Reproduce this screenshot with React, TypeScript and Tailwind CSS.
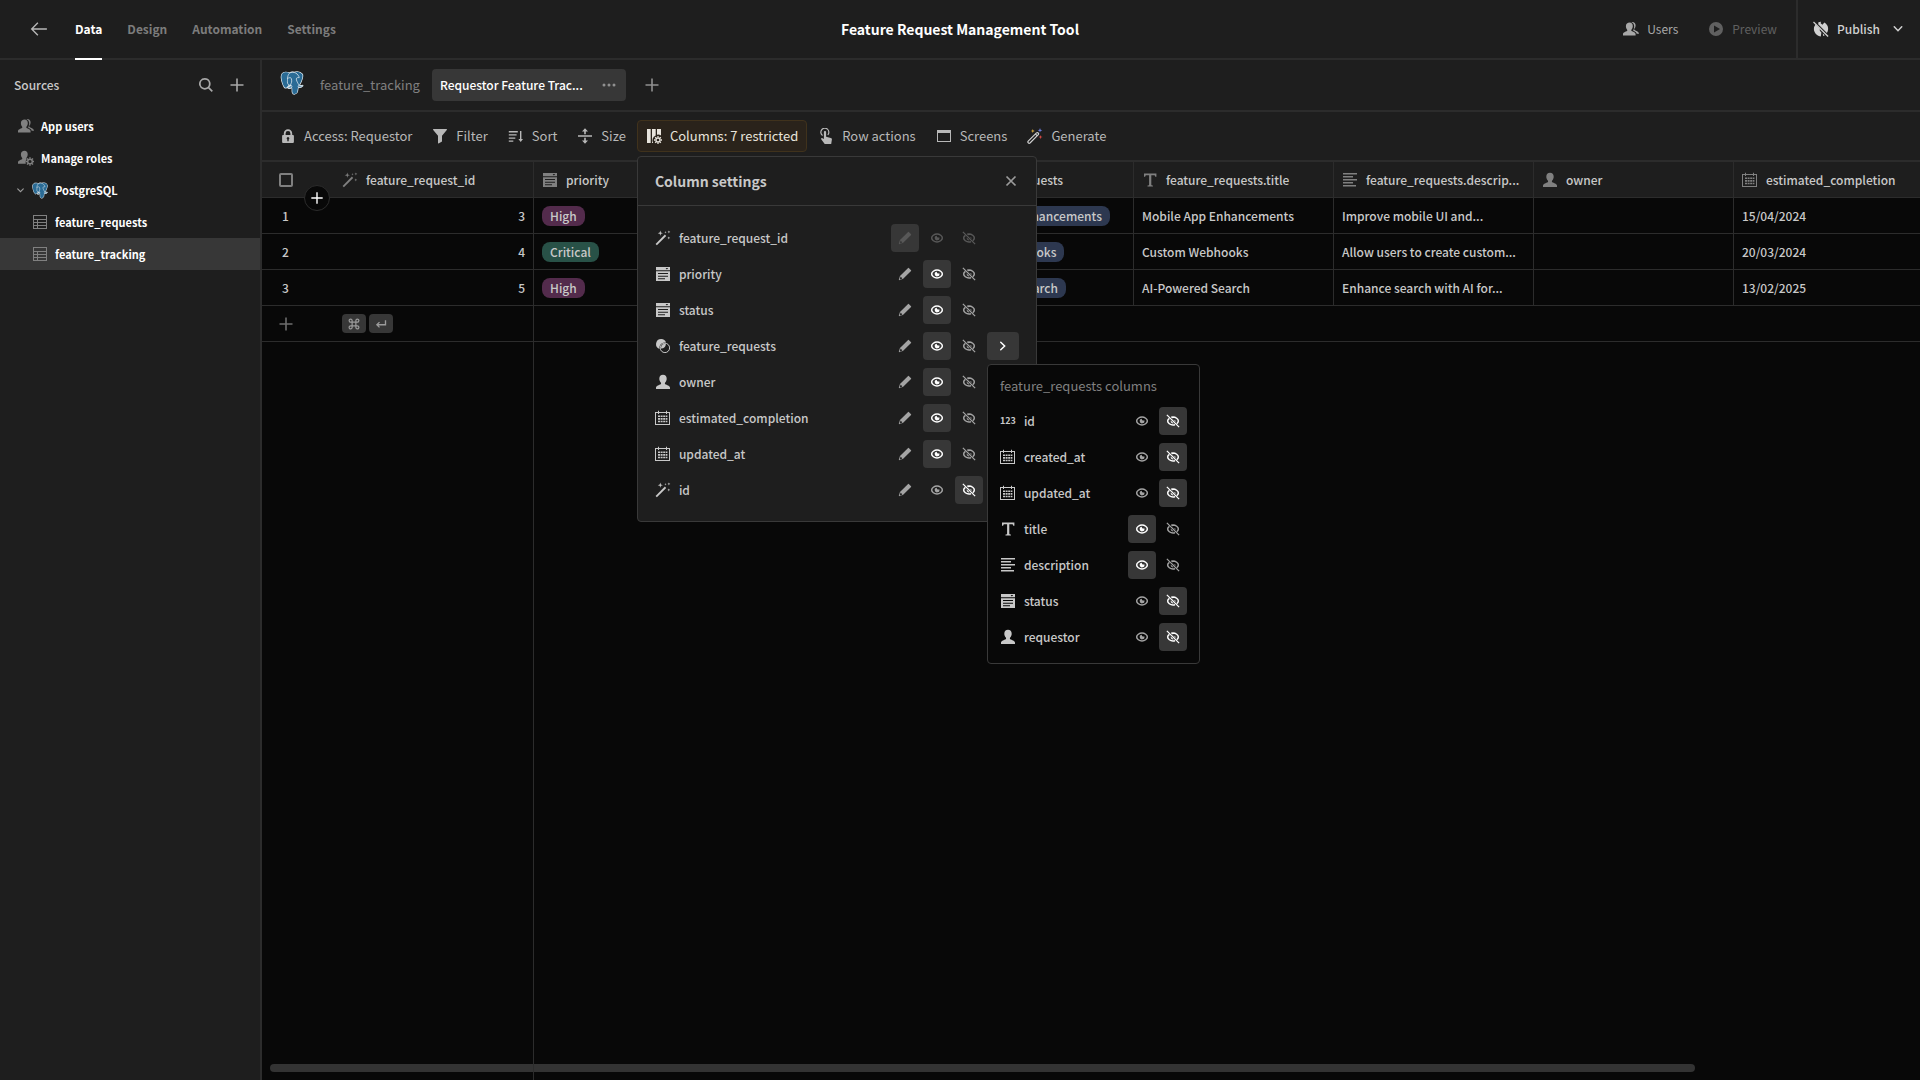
import type { ReactNode } from "react";

type IconProps = { className?: string };

type Kind = "wand" | "list" | "relation" | "user" | "date" | "text" | "long" | "number";

const COLUMNS: { name: string; kind: Kind }[] = [
  { name: "priority", kind: "list" },
  { name: "status", kind: "list" },
  { name: "feature_requests", kind: "relation" },
  { name: "feature_requests.title", kind: "text" },
  { name: "feature_requests.descrip...", kind: "long" },
  { name: "owner", kind: "user" },
  { name: "estimated_completion", kind: "date" },
];

const ROWS = [
  {
    id: 3,
    priority: "High",
    title: "Mobile App Enhancements",
    description: "Improve mobile UI and...",
    completion: "15/04/2024",
  },
  {
    id: 4,
    priority: "Critical",
    title: "Custom Webhooks",
    description: "Allow users to create custom...",
    completion: "20/03/2024",
  },
  {
    id: 5,
    priority: "High",
    title: "AI-Powered Search",
    description: "Enhance search with AI for...",
    completion: "13/02/2025",
  },
];

type Mode = "write" | "read" | "hidden";

const SETTINGS: { name: string; kind: Kind; mode: Mode; disabled?: boolean; nested?: boolean }[] = [
  { name: "feature_request_id", kind: "wand", mode: "write", disabled: true },
  { name: "priority", kind: "list", mode: "read" },
  { name: "status", kind: "list", mode: "read" },
  { name: "feature_requests", kind: "relation", mode: "read", nested: true },
  { name: "owner", kind: "user", mode: "read" },
  { name: "estimated_completion", kind: "date", mode: "read" },
  { name: "updated_at", kind: "date", mode: "read" },
  { name: "id", kind: "wand", mode: "hidden" },
];

const NESTED: { name: string; kind: Kind; mode: Mode }[] = [
  { name: "id", kind: "number", mode: "hidden" },
  { name: "created_at", kind: "date", mode: "hidden" },
  { name: "updated_at", kind: "date", mode: "hidden" },
  { name: "title", kind: "text", mode: "read" },
  { name: "description", kind: "long", mode: "read" },
  { name: "status", kind: "list", mode: "hidden" },
  { name: "requestor", kind: "user", mode: "hidden" },
];

function Svg({ className = "h-4 w-4", children }: { className?: string; children: ReactNode }) {
  return (
    <svg viewBox="0 0 16 16" fill="currentColor" aria-hidden="true" className={`shrink-0 ${className}`}>
      {children}
    </svg>
  );
}

function PostgresLogo({ className }: IconProps) {
  const body =
    "M402.395,271.23c-50.302,10.376-53.76-6.655-53.76-6.655c53.111-78.808,75.313-178.843,56.153-203.326c-52.27-66.785-142.752-35.2-144.262-34.38l-0.486,0.087c-9.938-2.063-21.06-3.292-33.56-3.496c-22.761-0.373-40.026,5.967-53.127,15.902c0,0-161.411-66.495-153.904,83.63c1.597,31.938,45.776,241.657,98.471,178.312c19.26-23.162,37.869-42.748,37.869-42.748c9.243,6.14,20.308,9.272,31.908,8.147l0.901-0.765c-0.28,2.876-0.152,5.689,0.361,9.019c-13.575,15.167-9.586,17.83-36.723,23.416c-27.457,5.659-11.327,15.734-0.796,18.367c12.768,3.193,42.305,7.716,62.266-20.224l-0.796,3.188c5.319,4.26,9.054,27.711,8.428,48.969c-0.626,21.259-1.044,35.854,3.147,47.254c4.191,11.4,8.368,37.05,44.042,29.406c29.809-6.388,45.256-22.942,47.405-50.555c1.525-19.631,4.976-16.729,5.194-34.28l2.768-8.309c3.192-26.611,0.507-35.196,18.872-31.203l4.463,0.392c13.517,0.615,31.208-2.174,41.591-7c22.358-10.376,35.618-27.7,13.573-23.148z";
  return (
    <svg viewBox="0 0 432 446" aria-hidden="true" className={`shrink-0 ${className}`}>
      <path d={body} fill="#dfeaf0" stroke="#dfeaf0" strokeWidth="26" strokeLinejoin="round" />
      <path d={body} fill="#2a6b95" />
      <g fill="none" stroke="#dfeaf0" strokeWidth="14" strokeLinecap="round" strokeLinejoin="round">
        <path d="M348.282,263.953c0,0,3.461,17.036,53.764,6.653c22.04-4.552,8.776,12.774-13.577,23.155c-18.345,8.514-59.474,10.696-60.146-1.069c-1.729-30.355,21.647-21.133,19.96-28.739c-1.525-6.85-11.979-13.573-18.894-30.338c-6.037-14.633-82.796-126.849,21.287-110.183c3.813-0.789-27.146-99.002-124.553-100.599c-97.385-1.597-94.19,119.762-94.19,119.762" />
        <path d="M188.604,274.334c-13.577,15.166-9.584,17.829-36.723,23.417c-27.459,5.66-11.326,15.733-0.797,18.365c12.768,3.195,42.307,7.718,62.266-20.229c6.078-8.509-0.036-22.086-8.385-25.547c-4.034-1.671-9.428-3.765-16.361,3.994z" />
        <path d="M187.715,274.069c-1.368-8.917,2.93-19.528,7.536-31.942c6.922-18.626,22.893-37.255,10.117-96.339c-9.523-44.029-73.396-9.163-73.436-3.193c-0.039,5.968,2.889,30.26-1.067,58.548c-5.162,36.913,23.488,68.132,56.479,64.938" />
      </g>
    </svg>
  );
}

function KindIcon({ kind }: { kind: Kind }) {
  if (kind === "number") {
    return <span className="w-4 text-[9px] leading-4 font-bold">123</span>;
  }
  if (kind === "wand") {
    return (
      <Svg>
        <path d="M.6 13.9 9.9 4.6l1.3 1.3-9.3 9.3z" />
        <path d="M5.3.6l.6 2 2 .6-2 .6-.6 2-.6-2-2-.6 2-.6zM10.5 1l.3.9.9.3-.9.3-.3.9-.3-.9-.9-.3.9-.3zM13.9.4l.4 1.1 1.1.4-1.1.4-.4 1.1-.4-1.1-1.1-.4 1.1-.4zM13.8 6.4l.4 1.1 1.1.4-1.1.4-.4 1.1-.4-1.1-1.1-.4 1.1-.4z" />
      </Svg>
    );
  }
  if (kind === "list") {
    return (
      <Svg>
        <path fillRule="evenodd" d="M1 1h14v3.2H1zM10.6 2l1.3 1.5L13.2 2z" />
        <path fillRule="evenodd" d="M1 5.2h14V15H1zM3 7v1h10V7zm0 2.7v1h10v-1zm0 2.6v1h7v-1z" />
      </Svg>
    );
  }
  if (kind === "relation") {
    return (
      <Svg>
        <path d="M6.2 1a5.2 5.2 0 0 1 4.9 3.5 5.6 5.6 0 0 0-6.6 6.6A5.2 5.2 0 0 1 6.2 1z" />
        <circle cx="9.9" cy="9.9" r="4.7" fill="none" stroke="currentColor" strokeWidth="1" />
        <path d="M6 10.6a4.4 4.4 0 0 1 4.9-4.9 5.2 5.2 0 0 1-4.9 4.9z" />
      </Svg>
    );
  }
  if (kind === "user") {
    return (
      <Svg>
        <path d="M8 .8c2.300 0 3.700 1.600 3.700 3.900 0 1.500-.6 2.900-1.500 3.800-.4.400-.4 1.500.1 1.800 1.400.800 4.700 1.300 4.700 3.500V15H1v-1.200c0-2.200 3.300-2.700 4.700-3.500.5-.3.5-1.400.1-1.800-.9-.9-1.500-2.300-1.500-3.800C4.300 2.400 5.700.8 8 .8z" />
      </Svg>
    );
  }
  if (kind === "date") {
    return (
      <Svg>
        <path fillRule="evenodd" d="M0 2h3v2h1V2h7v2h1V2h3v13H0zm1 1v11h13V3z" />
        <path d="M3 .8h1V4H3zM11 .8h1V4h-1zM3 5.500h2v1.600H3zM5.600 5.500h2v1.600h-2zM8.200 5.500h2v1.600h-2zM10.800 5.500h1.600v1.600h-1.600zM3 8.100h2v1.600H3zM5.600 8.100h2v1.600h-2zM8.200 8.100h2v1.600h-2zM10.800 8.100h1.600v1.600h-1.600zM3 10.700h2v1.600H3zM5.600 10.700h2v1.600h-2zM8.200 10.700h2v1.600h-2zM10.800 10.700h1.600v1.600h-1.600z" />
      </Svg>
    );
  }
  if (kind === "text") {
    return (
      <Svg>
        <path d="M2 1.500h12.400v3.300h-1.200c-.1-1.100-.5-1.500-1.600-1.500H9.300v9.200c0 .8.4 1 1.600 1v1H5.500v-1c1.200 0 1.600-.2 1.600-1V3.300H4.800c-1.100 0-1.500.4-1.600 1.500H2z" />
      </Svg>
    );
  }
  return (
    <Svg>
      <path d="M1 1h14v1.500H1zM1 4h10v1.500H1zM1 7h14v1.500H1zM1 10h10v1.500H1zM1 13h13v1.500H1z" />
    </Svg>
  );
}

function UsersIcon() {
  return (
    <Svg>
      <path d="M6.600 1.500c2 0 3.200 1.500 3.200 3.500 0 1.400-.5 2.600-1.200 3.400-.4.400-.4 1.300 0 1.600 1.200.8 4 1.200 4 3.200V14.500H0v-1.300c0-2 2.800-2.400 4-3.200.4-.3.400-1.200 0-1.600C3.300 7.600 2.900 6.400 2.900 5c0-2 1.600-3.500 3.700-3.500z" />
      <path d="M9.300.9c2 0 3.300 1.500 3.300 3.500 0 1.300-.4 2.400-1.100 3.200-.4.400-.3 1.200.1 1.500 1.200.8 4.400 1.700 4.400 3.700h-2.300c-.3-2-2.600-2.600-3.700-3.300.7-1 1.200-2.500 1.200-4 0-2.100-1-3.600-2.900-4.200z" />
    </Svg>
  );
}

function ManageIcon() {
  return (
    <Svg>
      <path d="M6.500.8c2 0 3.200 1.500 3.200 3.500 0 1.400-.5 2.600-1.200 3.400-.3.400-.2 1.100.1 1.500-.8.900-1.200 2.500-.8 4.600H0v-1.300c0-2 2.800-2.400 4-3.200.4-.3.400-1.200 0-1.600C3.300 6.900 2.900 5.700 2.900 4.300c0-2 1.500-3.500 3.600-3.500z" />
      <circle cx="12" cy="11.500" r="2.300" fill="none" stroke="currentColor" strokeWidth="1.400" />
      <path
        d="M12 7.200v1.600M12 14.200v1.600M7.700 11.500h1.600M14.700 11.500h1.600M9 8.500l1.100 1.100M13.900 13.400l1.100 1.100M9 14.500l1.100-1.100M13.900 9.600 15 8.500"
        stroke="currentColor"
        strokeWidth="1.400"
      />
    </Svg>
  );
}

function PlusIcon({ className }: IconProps) {
  return (
    <Svg className={className}>
      <path d="M7.200 1.500h1.600v5.700h5.700v1.600H8.800v5.700H7.200V8.800H1.500V7.200h5.700z" />
    </Svg>
  );
}

function SearchIcon() {
  return (
    <Svg>
      <path d="M6.800 1a5.800 5.800 0 0 1 4.600 9.300l3.500 3.500-1.200 1.200-3.500-3.500A5.800 5.800 0 1 1 6.800 1zm0 1.700a4.100 4.100 0 1 0 0 8.200 4.100 4.100 0 0 0 0-8.200z" />
    </Svg>
  );
}

function ChevronIcon({ className }: IconProps) {
  return (
    <Svg className={className}>
      <path d="m3 5 5 5.200L13 5" fill="none" stroke="currentColor" strokeWidth="2" strokeLinecap="round" />
    </Svg>
  );
}

function TableIcon() {
  return (
    <Svg>
      <path fillRule="evenodd" d="M1 1h14v14H1zm1 1v3h12V2zm0 4v2h3V6zm4 0v2h8V6zM2 9v2h3V9zm4 0v2h8V9zm-4 3v2h3v-2zm4 0v2h8v-2z" />
    </Svg>
  );
}

function PencilIcon() {
  return (
    <svg viewBox="0 0 36 36" fill="currentColor" aria-hidden="true" className="h-[14px] w-[14px]">
      <path d="M33.567 8.200 27.800 2.432a1.215 1.215 0 0 0-.866-.353H26.900a1.371 1.371 0 0 0-.927.406L5.084 23.372a.99.99 0 0 0-.251.422L2.055 33.100c-.114.377.459.851.783.851.3-.02 7.928-2.351 9.373-2.785a.972.972 0 0 0 .414-.249l20.888-20.889a1.372 1.372 0 0 0 .406-.91 1.233 1.233 0 0 0-.352-.918zM11.400 29.316c-2.161.649-4.862 1.465-6.729 2.022l2.009-6.730z" />
    </svg>
  );
}

function EyeIcon() {
  return (
    <Svg className="h-[14px] w-[14px]">
      <path d="M8 3.400C5 3.400 1.900 5.700 1.900 8S5 12.600 8 12.600s6.100-2.300 6.100-4.600S11 3.400 8 3.400z" fill="none" stroke="currentColor" strokeWidth="1.700" />
      <path d="M8 5.300a1.300 1.300 0 0 0 1 2 1.300 1.300 0 0 0 1.600-.2A2.700 2.700 0 1 1 8 5.300z" />
    </Svg>
  );
}

function EyeOffIcon() {
  return (
    <Svg className="h-[14px] w-[14px]">
      <path
        d="M6 3.800a7 7 0 0 1 2-.4c3 0 6.100 2.300 6.100 4.600 0 1.100-.7 2.200-1.800 3.100M3.900 4.900C2.700 5.800 1.900 6.900 1.900 8c0 2.300 3.100 4.600 6.100 4.600.8 0 1.600-.2 2.300-.4"
        fill="none"
        stroke="currentColor"
        strokeWidth="1.700"
      />
      <path d="M8 5.300a1.300 1.300 0 0 0 1 2 1.300 1.300 0 0 0 1.600-.2q.4 1 0 2L7 5.500zM5.400 7.500l3.200 3.200a2.700 2.700 0 0 1-3.200-3.200z" />
      <path d="m1 1 14 14" stroke="currentColor" strokeWidth="1.500" />
    </Svg>
  );
}

function ModeButton({ mode, active, disabled }: { mode: Mode; active: boolean; disabled?: boolean }) {
  return (
    <button
      type="button"
      aria-label={mode}
      aria-pressed={active}
      disabled={disabled}
      className={[
        "flex h-7 w-7 items-center justify-center rounded",
        active ? "bg-[#373737]" : "",
        disabled ? "text-[#585858]" : active ? "text-white" : "text-[#a4a4a4]",
      ].join(" ")}
    >
      {mode === "write" && <PencilIcon />}
      {mode === "read" && <EyeIcon />}
      {mode === "hidden" && <EyeOffIcon />}
    </button>
  );
}

function NestedColumns() {
  return (
    <div className="absolute top-full left-0 z-30 mt-1 flex w-[213px] flex-col gap-3 rounded border border-[#393939] bg-[#080808] p-3">
      <h3 className="text-[13px] leading-[18px] text-[#808080]">feature_requests columns</h3>
      <ul className="flex flex-col gap-2 text-[#c8c8c8]">
        {NESTED.map((column) => (
          <li key={column.name} className="flex h-7 items-center gap-2">
            <KindIcon kind={column.kind} />
            <span className="flex-1 text-xs leading-5 font-medium">{column.name}</span>
            <div className="flex gap-[3px]">
              <ModeButton mode="read" active={column.mode === "read"} />
              <ModeButton mode="hidden" active={column.mode === "hidden"} />
            </div>
          </li>
        ))}
      </ul>
    </div>
  );
}

function ColumnSettings() {
  return (
    <div className="absolute top-full left-0 z-20 mt-1 w-[400px] rounded border border-[#393939] bg-[#1e1e1e] text-[#c8c8c8]">
      <header className="flex h-[49px] items-center justify-between border-b border-[#393939] px-[17px]">
        <h2 className="text-sm leading-5 font-bold">Column settings</h2>
        <button type="button" aria-label="Close" className="text-[#9b9b9b]">
          <Svg>
            <path d="m3.500 3.500 9 9m0-9-9 9" stroke="currentColor" strokeWidth="1.700" />
          </Svg>
        </button>
      </header>
      <ul className="flex flex-col gap-2 px-[17px] pt-[18px] pb-[17px]">
        {SETTINGS.map((column) => (
          <li key={column.name} className="flex h-7 items-center gap-2">
            <KindIcon kind={column.kind} />
            <span className="flex-1 text-xs leading-5 font-medium">{column.name}</span>
            <div className="grid grid-cols-[28px_28px_28px_32px] gap-1">
              <ModeButton mode="write" active={column.mode === "write"} disabled={column.disabled} />
              <ModeButton mode="read" active={column.mode === "read"} disabled={column.disabled} />
              <ModeButton mode="hidden" active={column.mode === "hidden"} disabled={column.disabled} />
              {column.nested && (
                <div className="relative">
                  <button
                    type="button"
                    aria-label="Nested columns"
                    className="flex h-7 w-8 items-center justify-center rounded bg-[#373737] text-white"
                  >
                    <ChevronIcon className="h-3 w-3 -rotate-90" />
                  </button>
                  <NestedColumns />
                </div>
              )}
            </div>
          </li>
        ))}
      </ul>
    </div>
  );
}

function Tool({ icon, label, active }: { icon: ReactNode; label: string; active?: boolean }) {
  return (
    <button
      type="button"
      className={[
        "flex h-8 items-center gap-2 rounded border px-2 text-[13px] leading-5 whitespace-nowrap",
        active ? "border-[#40321c] bg-[#2a231b] text-[#e8e4dc]" : "border-transparent text-[#b8b8b8]",
      ].join(" ")}
    >
      {icon}
      {label}
    </button>
  );
}

function Toolbar() {
  return (
    <div className="flex h-[50px] items-center gap-[2px] border-b-2 border-[#2c2c2c] px-[9px]">
      <Tool
        label="Access: Requestor"
        icon={
          <Svg>
            <path fillRule="evenodd" d="M13 7h-.8V5.400a4.200 4.200 0 0 0-8.400 0V7H3a.9.9 0 0 0-.9.900v6.200c0 .5.400.9.9.9h10c.5 0 .9-.4.9-.9V7.900A.9.9 0 0 0 13 7zM5.600 5.400a2.400 2.400 0 0 1 4.800 0V7H5.600zm3.100 6v1.900H7.300v-1.900a1.300 1.300 0 1 1 1.400 0z" />
          </Svg>
        }
      />
      <Tool
        label="Filter"
        icon={
          <Svg>
            <path d="M1.600 1h12.800c.5 0 .7.500.4.9L10 7.800v5.600l-3.400 2c-.3.1-.6 0-.6-.4V7.800L1.200 1.900c-.3-.4-.1-.9.4-.9z" />
          </Svg>
        }
      />
      <Tool
        label="Sort"
        icon={
          <Svg>
            <path d="M.8 3h9v1.400h-9zM.8 6.200h7.800v1.400H.8zM.8 9.400h6.500v1.400H.8zM.8 12.400h4.500v1.400H.8zM12 3h1.400v8H15l-2.300 3-2.300-3H12z" />
          </Svg>
        }
      />
      <Tool
        label="Size"
        icon={
          <Svg>
            <path d="M1 7.200h14v1.600H1zM8 .3l3 3.200H8.800v2.700H7.200V3.500H5zM8 15.700l-3-3.200h2.200V9.800h1.600v2.700H11z" />
          </Svg>
        }
      />
      <div className="relative">
        <Tool
          active
          label="Columns: 7 restricted"
          icon={
            <Svg>
              <path d="M1 1h3.700v14H1zM6 1h3.700v6.600A5 5 0 0 0 7.200 15H6zM11 1h4v6.500a5 5 0 0 0-4-.8z" />
              <circle cx="12" cy="12" r="2" fill="none" stroke="currentColor" strokeWidth="1.300" />
              <path d="M12 8v1.500M12 14.500V16M8 12h1.500M14.500 12H16M9.200 9.200l1 1M13.800 13.800l1 1M9.200 14.800l1-1M13.800 10.200l1-1" stroke="currentColor" strokeWidth="1.300" />
            </Svg>
          }
        />
        <ColumnSettings />
      </div>
      <Tool
        label="Row actions"
        icon={
          <Svg>
            <path d="M5.900 4.200c0-.7.500-1.100 1.100-1.100s1.100.4 1.100 1.100v4.500l4.700 1.200c.8.200 1.200.8 1.100 1.600L13.200 16H6.700L3.200 11.300c-.4-.6.400-1.500 1.200-1.100l1.500.9z" />
            <path d="M4.600 7.500a4 4 0 1 1 5.200-.6" fill="none" stroke="currentColor" strokeWidth="1.200" />
          </Svg>
        }
      />
      <Tool
        label="Screens"
        icon={
          <Svg>
            <path fillRule="evenodd" d="M1 2h14v12H1zm1 3v8h12V5z" />
          </Svg>
        }
      />
      <Tool
        label="Generate"
        icon={
          <Svg>
            <path d="m1.200 13.200 8.300-8.300c1.200-1 2.800.6 1.800 1.800L3 15c-1.200.9-2.700-.7-1.800-1.800zM8.600 6.200l1.700 1.700" fill="none" stroke="#d0d0d0" strokeWidth="1.200" />
            <path d="m5.800.9.5 1.500 1.500.5-1.500.5-.5 1.500-.5-1.500-1.500-.5 1.500-.5z" fill="#e3b341" />
            <path d="m13 0 .6 1.700 1.700.6-1.700.6L13 4.600l-.6-1.700-1.700-.6 1.700-.6z" fill="#6d7fe0" />
            <path d="m13.500 7 .5 1.600 1.600.5-1.600.5-.5 1.600-.5-1.600-1.600-.5 1.600-.5z" fill="#dd4b45" />
          </Svg>
        }
      />
    </div>
  );
}

function Header() {
  return (
    <header className="relative flex h-[60px] shrink-0 items-center justify-between border-b-2 border-[#2c2c2c] text-xs leading-5">
      <div className="flex h-full items-center">
        <a href="#back" aria-label="Back" className="mr-[27px] ml-[30px] text-[#b8b8b8]">
          <Svg className="h-[18px] w-[18px]">
            <path d="M7 2.500 1.500 8 7 13.500M1.500 8H15" fill="none" stroke="currentColor" strokeWidth="1.200" />
          </Svg>
        </a>
        <nav className="-mb-[2px] flex h-[60px] gap-[25px] pt-[19px] font-bold text-[#7c7c7c]">
          <a href="#data" className="border-b-2 border-white text-white">
            Data
          </a>
          <a href="#design">Design</a>
          <a href="#automation">Automation</a>
          <a href="#settings">Settings</a>
        </nav>
      </div>
      <h1 className="absolute left-1/2 -translate-x-1/2 text-sm font-bold text-white">
        Feature Request Management Tool
      </h1>
      <div className="flex h-full items-center">
        <button type="button" className="mr-[30px] flex items-center gap-2 text-[#a8a8a8]">
          <UsersIcon />
          Users
        </button>
        <button type="button" disabled className="mr-[19px] flex items-center gap-2 text-[#606060]">
          <Svg>
            <path fillRule="evenodd" d="M8 1a7 7 0 1 1 0 14A7 7 0 0 1 8 1zM6 4.500v7L12 8z" />
          </Svg>
          Preview
        </button>
        <button type="button" className="flex h-full items-center gap-2 border-l-2 border-[#2c2c2c] pr-4 pl-[15px] font-medium text-[#d0d0d0]">
          <Svg>
            <path d="M5.400 1.200A7 7 0 0 1 8 .8l-.4 1.500 1.800 1.400 2-2.200a7.400 7.400 0 0 1 3.700 6.700c-.1 1.400-.5 2.600-1.200 3.700L5.200 3.200zM2.500 3.500l4.300 4.300v2l1.600 1.700-.6 3.900A7.400 7.400 0 0 1 2.500 3.500zM9.800 12.500l2 1.700-1.700.8z" />
            <path d="m.5 1 14.600 14.500" stroke="currentColor" strokeWidth="1.300" />
          </Svg>
          Publish
          <ChevronIcon className="ml-1 h-3 w-3" />
        </button>
      </div>
    </header>
  );
}

function Sidebar() {
  return (
    <aside className="w-[262px] shrink-0 border-r-2 border-[#2c2c2c]">
      <div className="flex h-[50px] items-center gap-[15px] pr-[15px] pl-[14px] text-[#a8a8a8]">
        <h2 className="flex-1 text-xs leading-5 font-medium text-[#c8c8c8]">Sources</h2>
        <button type="button" aria-label="Search">
          <SearchIcon />
        </button>
        <button type="button" aria-label="Add source">
          <PlusIcon />
        </button>
      </div>
      <nav className="flex flex-col text-[11px] leading-4 font-bold text-white">
        <a href="#users" className="flex h-8 items-center gap-[7px] pl-[18px]">
          <span className="text-[#808080]">
            <UsersIcon />
          </span>
          App users
        </a>
        <a href="#roles" className="flex h-8 items-center gap-[7px] pl-[18px]">
          <span className="text-[#808080]">
            <ManageIcon />
          </span>
          Manage roles
        </a>
        <a href="#postgresql" className="flex h-8 items-center gap-[7px] pl-4">
          <ChevronIcon className="h-[9px] w-[9px] text-[#9b9b9b]" />
          <PostgresLogo className="h-[17px] w-4" />
          PostgreSQL
        </a>
        <a href="#feature_requests" className="flex h-8 items-center gap-[7px] pl-8">
          <span className="text-[#808080]">
            <TableIcon />
          </span>
          feature_requests
        </a>
        <a href="#feature_tracking" className="flex h-8 items-center gap-[7px] bg-[#373737] pl-8">
          <span className="text-[#808080]">
            <TableIcon />
          </span>
          feature_tracking
        </a>
      </nav>
    </aside>
  );
}

function Tabs() {
  return (
    <div className="flex h-[52px] items-center border-b-2 border-[#2c2c2c] pl-[18px] leading-5">
      <PostgresLogo className="mb-1 h-6 w-6" />
      <a href="#feature_tracking" className="mr-3 ml-4 text-[13px] text-[#808080]">
        feature_tracking
      </a>
      <div className="flex h-8 w-[194px] items-center justify-between rounded bg-[#373737] pr-[9px] pl-2">
        <a href="#requestor" className="text-xs font-medium text-white">
          Requestor Feature Trac...
        </a>
        <button type="button" aria-label="More" className="text-[#909090]">
          <Svg>
            <circle cx="3" cy="8" r="1.500" />
            <circle cx="8" cy="8" r="1.500" />
            <circle cx="13" cy="8" r="1.500" />
          </Svg>
        </button>
      </div>
      <button type="button" aria-label="Add view" className="ml-[18px] text-[#909090]">
        <PlusIcon />
      </button>
    </div>
  );
}

function Pill({ label, tone }: { label: string; tone: string }) {
  return (
    <span className={`inline-block rounded-lg px-2 leading-5 whitespace-nowrap ${tone}`}>
      {label}
    </span>
  );
}

function Grid() {
  const cell = "h-9 border-r border-b border-[#2c2c2c] px-2 truncate";
  return (
    <div className="relative flex flex-1 flex-col overflow-hidden bg-[#080808]">
      <table className="w-[1672px] table-fixed border-separate border-spacing-0 text-xs leading-5 font-medium text-[#c8c8c8]">
        <colgroup>
          <col className="w-[72px]" />
          <col className="w-[200px]" />
          {COLUMNS.map((column) => (
            <col key={column.name} className="w-[200px]" />
          ))}
        </colgroup>
        <thead className="bg-[#1e1e1e] text-left">
          <tr>
            <th className="h-9 border-b border-[#2c2c2c] pl-[17px]">
              <input
                type="checkbox"
                aria-label="Select all rows"
                className="block h-[14px] w-[14px] appearance-none rounded-xs border-2 border-[#808080]"
              />
            </th>
            {[{ name: "feature_request_id", kind: "wand" as Kind }, ...COLUMNS].map((column) => (
              <th key={column.name} className={`${cell} font-medium`}>
                <div className="flex items-center gap-2">
                  <span className="text-[#808080]">
                    <KindIcon kind={column.kind} />
                  </span>
                  {column.name}
                </div>
              </th>
            ))}
          </tr>
        </thead>
        <tbody>
          {ROWS.map((row, index) => (
            <tr key={row.id}>
              <td className="h-9 border-b border-[#2c2c2c] pl-5">{index + 1}</td>
              <td className={`${cell} text-right`}>{row.id}</td>
              <td className={cell}>
                <Pill label={row.priority} tone={row.priority === "High" ? "bg-[#532b4c]" : "bg-[#285147]"} />
              </td>
              <td className={cell} />
              <td className={cell}>
                <Pill label={row.title} tone="bg-[#2d3850]" />
              </td>
              <td className={cell}>{row.title}</td>
              <td className={cell}>{row.description}</td>
              <td className={cell} />
              <td className={cell}>{row.completion}</td>
            </tr>
          ))}
          <tr>
            <td className="h-9 border-b border-[#2c2c2c] pl-4">
              <button type="button" aria-label="Add row" className="block text-[#6d6d6d]">
                <PlusIcon />
              </button>
            </td>
            <td className={cell}>
              <div className="flex gap-[3px] text-[#9b9b9b]">
                <kbd className="flex h-[19px] w-6 items-center justify-center rounded bg-[#373737]">
                  <Svg className="h-3 w-3">
                    <path
                      d="M5.500 5.500h5v5h-5zM5.500 5.500V3.700a2 2 0 1 0-1.900 1.800zM10.500 5.500V3.700a2 2 0 1 1 1.900 1.800zM5.500 10.500v1.800a2 2 0 1 1-1.900-1.800zM10.500 10.500v1.800a2 2 0 1 0 1.900-1.800z"
                      fill="none"
                      stroke="currentColor"
                      strokeWidth="1.600"
                    />
                  </Svg>
                </kbd>
                <kbd className="flex h-[19px] w-6 items-center justify-center rounded bg-[#373737]">
                  <Svg className="h-3 w-3">
                    <path d="M14 3v6H3M6 5.500 2.500 9 6 12.500" fill="none" stroke="currentColor" strokeWidth="1.800" />
                  </Svg>
                </kbd>
              </div>
            </td>
            <td colSpan={COLUMNS.length} className="border-b border-[#2c2c2c]" />
          </tr>
        </tbody>
      </table>
      <div className="z-10 w-[272px] flex-1 border-r border-[#2c2c2c]" />
      <button
        type="button"
        aria-label="Add"
        className="absolute top-[23px] left-[42px] flex h-[26px] w-[26px] items-center justify-center rounded-full border border-[#2c2c2c] bg-[#080808] text-white"
      >
        <PlusIcon className="h-[14px] w-[14px]" />
      </button>
      <div className="absolute right-3 bottom-2 left-2">
        <div className="h-2 w-[87%] rounded-full bg-[#333333]" />
      </div>
    </div>
  );
}

export default function App() {
  return (
    <div className="flex h-screen flex-col overflow-hidden bg-[#1e1e1e] font-['Noto_Sans_CJK_SC',sans-serif]">
      <Header />
      <div className="flex min-h-0 flex-1">
        <Sidebar />
        <main className="flex min-w-0 flex-1 flex-col">
          <Tabs />
          <Toolbar />
          <Grid />
        </main>
      </div>
    </div>
  );
}
